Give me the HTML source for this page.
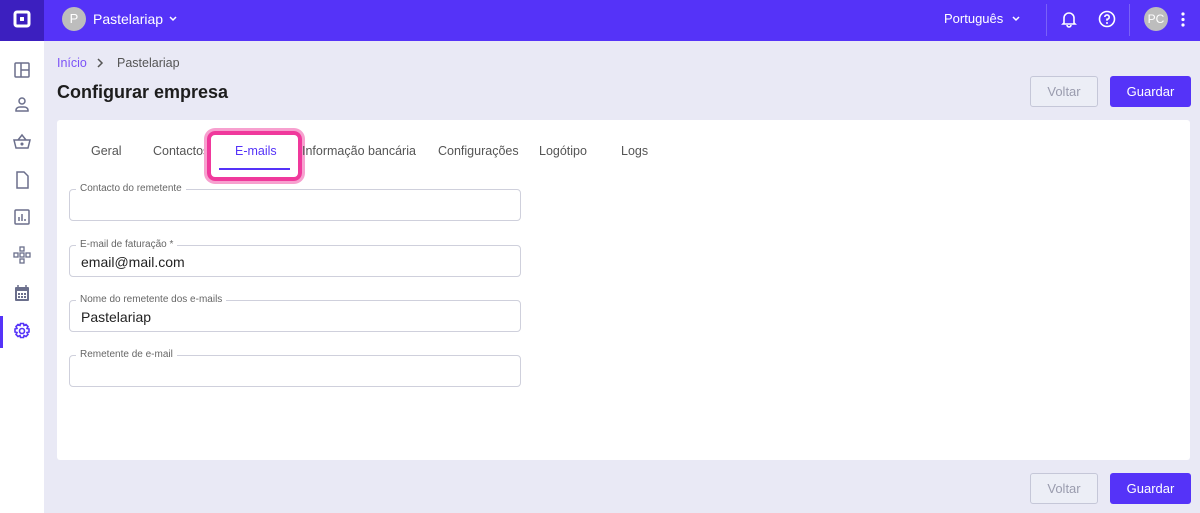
<!DOCTYPE html>
<html><head><meta charset="utf-8"><style>
*{box-sizing:border-box;margin:0;padding:0}
body{width:1200px;height:513px;overflow:hidden;background:#e9e9f5;font-family:"Liberation Sans",sans-serif;position:relative;color:#222}
.hdr{position:absolute;left:0;top:0;width:1200px;height:41px;background:#5533f8}
.logo{position:absolute;left:0;top:0;width:44px;height:41px;background:#3c1fbf}
.side{position:absolute;left:0;top:41px;width:44px;height:472px;background:#fff}
.ic{position:absolute;left:13px;width:18px;height:18px}
.abs{position:absolute}
.btn{position:absolute;height:31px;border-radius:3px;font-size:13px;display:flex;align-items:center;justify-content:center}
.v{border:1px solid #c5c7d8;color:#9a9cae;background:#eceef6;width:68px}
.g{background:#5533f8;color:#fff;width:81px}
.card{position:absolute;left:57px;top:120px;width:1133px;height:340px;background:#fff;border-radius:3px}
.tab{position:absolute;top:24px;font-size:12.5px;color:#555}
.fld{position:absolute;left:12px;width:452px;height:32px;border:1px solid #cfd0dc;border-radius:4px}
.fld label{position:absolute;left:6px;top:-7px;background:#fff;padding:0 4px;font-size:10px;color:#666}
.fld span{position:absolute;left:11px;top:8px;font-size:14px;color:#222}
</style></head><body>
<div class="hdr"></div>
<div class="logo"><svg class="abs" style="left:12px;top:9px" width="20" height="20" viewBox="0 0 20 20"><path d="M5 3h10a2 2 0 0 1 2 2v10a2 2 0 0 1-2 2H5a2 2 0 0 1-2-2V5a2 2 0 0 1 2-2z" fill="none" stroke="#fff" stroke-width="3"/><rect x="8" y="8" width="4" height="4" rx=".5" fill="#fff"/></svg></div>
<div class="abs" style="left:62px;top:7px;width:24px;height:24px;border-radius:50%;background:#bdbdbd;color:#fff;font-size:13px;text-align:center;line-height:24px">P</div>
<div class="abs" style="left:93px;top:11px;color:#fff;font-size:14px">Pastelariap</div>
<svg class="abs" style="left:168px;top:14px" width="10" height="10" viewBox="0 0 10 10"><path d="M2 3l3 3 3-3" stroke="#fff" stroke-width="1.5" fill="none"/></svg>
<div class="abs" style="left:944px;top:11px;color:#fff;font-size:13px">Português</div>
<svg class="abs" style="left:1011px;top:14px" width="10" height="10" viewBox="0 0 10 10"><path d="M2 3l3 3 3-3" stroke="#fff" stroke-width="1.5" fill="none"/></svg>
<div class="abs" style="left:1046px;top:4px;width:1px;height:32px;background:#7a61f8"></div>
<svg class="abs" style="left:1061px;top:10px" width="16" height="18" viewBox="0 0 16 18"><path d="M3 13V8a5 5 0 0 1 10 0v5l1 1H2zM6 15a2 2 0 0 0 4 0" stroke="#fff" stroke-width="1.6" fill="none"/></svg>
<svg class="abs" style="left:1098px;top:10px" width="18" height="18" viewBox="0 0 18 18"><circle cx="9" cy="9" r="7.5" stroke="#fff" stroke-width="1.6" fill="none"/><path d="M6.8 7a2.2 2.2 0 1 1 2.2 2.3v1.5" stroke="#fff" stroke-width="1.6" fill="none"/><circle cx="9" cy="13" r="1" fill="#fff"/></svg>
<div class="abs" style="left:1129px;top:4px;width:1px;height:32px;background:#7a61f8"></div>
<div class="abs" style="left:1144px;top:7px;width:24px;height:24px;border-radius:50%;background:#bdbdbd;color:#fff;font-size:12px;text-align:center;line-height:24px">PC</div>
<svg class="abs" style="left:1180px;top:11px" width="6" height="18"><circle cx="3" cy="3" r="1.6" fill="#fff"/><circle cx="3" cy="8.5" r="1.6" fill="#fff"/><circle cx="3" cy="14" r="1.6" fill="#fff"/></svg>
<div class="side">
<svg class="ic" style="top:20px" viewBox="0 0 18 18" fill="none" stroke="#6b6f8c" stroke-width="1.5"><rect x="2" y="2" width="14" height="14" rx="1"/><path d="M8 2v14M8 9h8"/></svg>
<svg class="ic" style="top:54px" viewBox="0 0 18 18" fill="none" stroke="#6b6f8c" stroke-width="1.5"><circle cx="9" cy="6" r="3"/><path d="M3 16v-1a4 3 0 0 1 4-3h4a4 3 0 0 1 4 3v1z"/></svg>
<svg class="ic" style="top:92px" viewBox="0 0 18 18" fill="none" stroke="#6b6f8c" stroke-width="1.5"><path d="M1 7h16l-2 8H3zM5 7l4-5 4 5"/><circle cx="9" cy="11" r=".8" fill="#6b6f8c"/></svg>
<svg class="ic" style="top:130px" viewBox="0 0 18 18" fill="none" stroke="#6b6f8c" stroke-width="1.5"><path d="M4 1h7l4 4v12H4z"/></svg>
<svg class="ic" style="top:167px" viewBox="0 0 18 18" fill="none" stroke="#6b6f8c" stroke-width="1.5"><rect x="2" y="2" width="14" height="14" rx="1"/><path d="M6 13V9M9 13V6M12 13v-2"/></svg>
<svg class="ic" style="top:205px" viewBox="0 0 18 18" fill="none" stroke="#6b6f8c" stroke-width="1.3"><rect x="7" y="1" width="4" height="4"/><rect x="7" y="7" width="4" height="4"/><rect x="7" y="13" width="4" height="4"/><rect x="1" y="7" width="4" height="4"/><rect x="13" y="7" width="4" height="4"/></svg>
<svg class="ic" style="top:243px" viewBox="0 0 18 18"><rect x="2" y="3" width="14" height="14" rx="1" fill="#6b6f8c"/><rect x="4" y="7" width="10" height="8" fill="#fff"/><path d="M5 1v3M13 1v3" stroke="#6b6f8c" stroke-width="1.5"/><g fill="#6b6f8c"><rect x="5" y="9" width="2" height="2"/><rect x="8" y="9" width="2" height="2"/><rect x="11" y="9" width="2" height="2"/><rect x="5" y="12" width="2" height="2"/><rect x="8" y="12" width="2" height="2"/><rect x="11" y="12" width="2" height="2"/></g></svg>
<div class="abs" style="left:0;top:275px;width:3px;height:32px;background:#5533f8"></div>
<svg class="ic" style="top:281px" viewBox="0 0 18 18" fill="none" stroke="#5533f8" stroke-width="1.6"><circle cx="9" cy="9" r="2.5"/><path d="M7.5 1.5h3l.5 2 2-1 2 2-1 2 2 .5v3l-2 .5 1 2-2 2-2-1-.5 2h-3l-.5-2-2 1-2-2 1-2-2-.5v-3l2-.5-1-2 2-2 2 1z"/></svg>
</div>
<div class="abs" style="left:57px;top:56px;font-size:12.5px;color:#7b52f7">Início</div>
<svg class="abs" style="left:96px;top:58px" width="8" height="10"><path d="M2 1l4 4-4 4" stroke="#555" stroke-width="1.5" fill="none"/></svg>
<div class="abs" style="left:117px;top:56px;font-size:12.5px;color:#555">Pastelariap</div>
<div class="abs" style="left:57px;top:82px;font-size:18px;font-weight:bold;color:#1d1d1d">Configurar empresa</div>
<div class="btn v" style="left:1030px;top:76px">Voltar</div>
<div class="btn g" style="left:1110px;top:76px">Guardar</div>
<div class="card">
<div class="tab" style="left:34px">Geral</div>
<div class="tab" style="left:96px">Contactos</div>
<div class="abs" style="left:150px;top:11px;width:95px;height:50px;border:4px solid #f0399c;border-radius:8px;box-shadow:0 0 0 3px #f7a0cf"></div>
<div class="tab" style="left:178px;color:#5533f8">E-mails</div>
<div class="abs" style="left:162px;top:48px;width:71px;height:2px;background:#5533f8"></div>
<div class="tab" style="left:245px">Informação bancária</div>
<div class="tab" style="left:381px">Configurações</div>
<div class="tab" style="left:482px">Logótipo</div>
<div class="tab" style="left:564px">Logs</div>
<div class="fld" style="top:69px"><label>Contacto do remetente</label></div>
<div class="fld" style="top:125px"><label>E-mail de faturação *</label><span>email@mail.com</span></div>
<div class="fld" style="top:180px"><label>Nome do remetente dos e-mails</label><span>Pastelariap</span></div>
<div class="fld" style="top:235px"><label>Remetente de e-mail</label></div>
</div>
<div class="btn v" style="left:1030px;top:473px">Voltar</div>
<div class="btn g" style="left:1110px;top:473px">Guardar</div>
</body></html>
